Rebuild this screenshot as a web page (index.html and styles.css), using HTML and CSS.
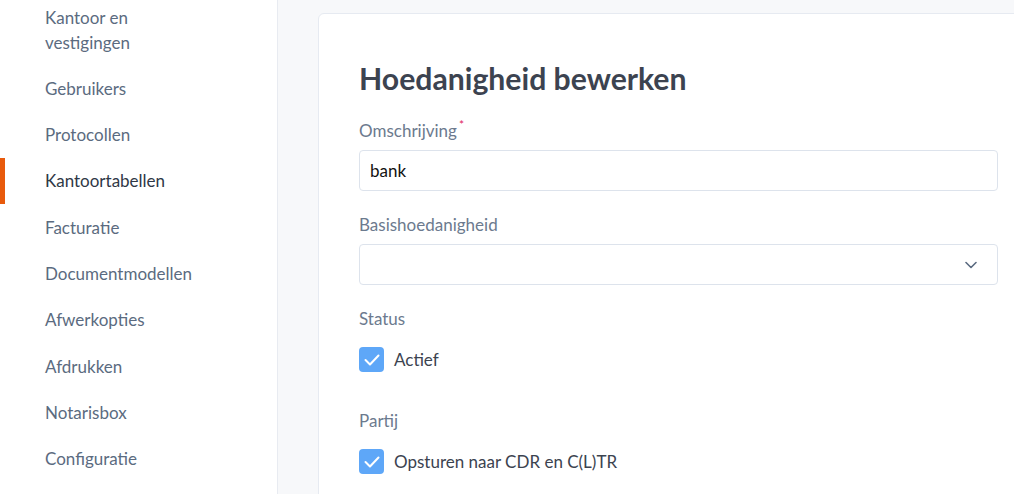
FILE: index.html
```html
<!DOCTYPE html>
<html lang="nl">
<head>
<meta charset="utf-8">
<title>Hoedanigheid bewerken</title>
<link rel="stylesheet" href="styles.css">
</head>
<body>
<div class="layout">
  <aside class="sidebar">
    <nav class="nav">
      <a class="nav-item">Kantoor en<br>vestigingen</a>
      <a class="nav-item">Gebruikers</a>
      <a class="nav-item">Protocollen</a>
      <a class="nav-item active">Kantoortabellen</a>
      <a class="nav-item">Facturatie</a>
      <a class="nav-item">Documentmodellen</a>
      <a class="nav-item">Afwerkopties</a>
      <a class="nav-item">Afdrukken</a>
      <a class="nav-item">Notarisbox</a>
      <a class="nav-item">Configuratie</a>
    </nav>
  </aside>
  <main class="main">
    <section class="card">
      <h1 class="title">Hoedanigheid bewerken</h1>
      <div class="field">
        <label class="label">Omschrijving<span class="req">*</span></label>
        <div class="input">bank</div>
      </div>
      <div class="field">
        <label class="label">Basishoedanigheid</label>
        <div class="input select">
          <svg class="chev" width="12" height="8" viewBox="0 0 12 8"><path d="M1 1.5 L6 6.5 L11 1.5" fill="none" stroke="#5b6b80" stroke-width="1.6" stroke-linecap="round" stroke-linejoin="round"/></svg>
        </div>
      </div>
      <div class="group">
        <div class="label">Status</div>
        <div class="check-row">
          <span class="checkbox"><svg width="16" height="12" viewBox="0 0 16 12"><path d="M1.5 6 L6 10.5 L14.5 1.5" fill="none" stroke="#fff" stroke-width="2" stroke-linecap="round" stroke-linejoin="round"/></svg></span>
          <span class="check-text">Actief</span>
        </div>
      </div>
      <div class="group">
        <div class="label">Partij</div>
        <div class="check-row">
          <span class="checkbox"><svg width="16" height="12" viewBox="0 0 16 12"><path d="M1.5 6 L6 10.5 L14.5 1.5" fill="none" stroke="#fff" stroke-width="2" stroke-linecap="round" stroke-linejoin="round"/></svg></span>
          <span class="check-text">Opsturen naar CDR en C(L)TR</span>
        </div>
      </div>
    </section>
  </main>
</div>
</body>
</html>
```
FILE: styles.css
```css
* { box-sizing: border-box; }
html, body { margin: 0; padding: 0; height: 100%; }
body {
  font-family: Lato, "Noto Sans", sans-serif;
  background: #f7f8fa;
  overflow: hidden;
}
.layout { display: flex; height: 494px; }
.sidebar {
  width: 278px;
  flex: none;
  background: #fff;
  border-right: 1px solid #e8ebf1;
}
.nav { display: flex; flex-direction: column; margin-top: -6px; }
.nav-item {
  position: relative;
  display: block;
  padding: 10.65px 0 10.65px 45px;
  font-size: 17px;
  line-height: 25px;
  color: #5b6b80;
}
.nav-item.active { color: #2f3846; }
.nav-item.active::before {
  content: "";
  position: absolute;
  left: 0; top: 0; bottom: 0;
  width: 5px;
  background: #e85a0c;
}
.main {
  flex: 1;
  overflow: hidden;
  padding: 13px 0 0 40px;
}
.card {
  width: 721px;
  background: #fff;
  border: 1px solid #e6eaf1;
  border-radius: 6px;
  padding: 46px 40px 40px;
}
.title {
  margin: 0 0 23px;
  font-size: 30.2px;
  line-height: 36px;
  font-weight: 700;
  color: #3c4350;
}
.field { margin-bottom: 22px; }
.label {
  display: block;
  font-size: 17px;
  line-height: 24px;
  color: #6c7a8e;
  margin-bottom: 7px;
}
.req {
  color: #e0245e;
  font-size: 12px;
  vertical-align: top;
  position: relative;
  top: -6px;
  margin-left: 2px;
}
.input {
  height: 41px;
  border: 1px solid #dde3ec;
  border-radius: 4px;
  padding: 0 10px;
  display: flex;
  align-items: center;
  font-size: 17px;
  color: #111;
}
.select { justify-content: flex-end; padding-right: 20px; }
.group { margin-bottom: 37px; }
.group .label { margin-bottom: 16px; }
.check-row { display: flex; align-items: center; gap: 10px; }
.checkbox {
  width: 25px; height: 25px;
  border-radius: 4px;
  background: #5ea7f8;
  display: flex; align-items: center; justify-content: center;
}
.check-text { font-size: 17px; color: #3c4350; line-height: 25px; }
```
